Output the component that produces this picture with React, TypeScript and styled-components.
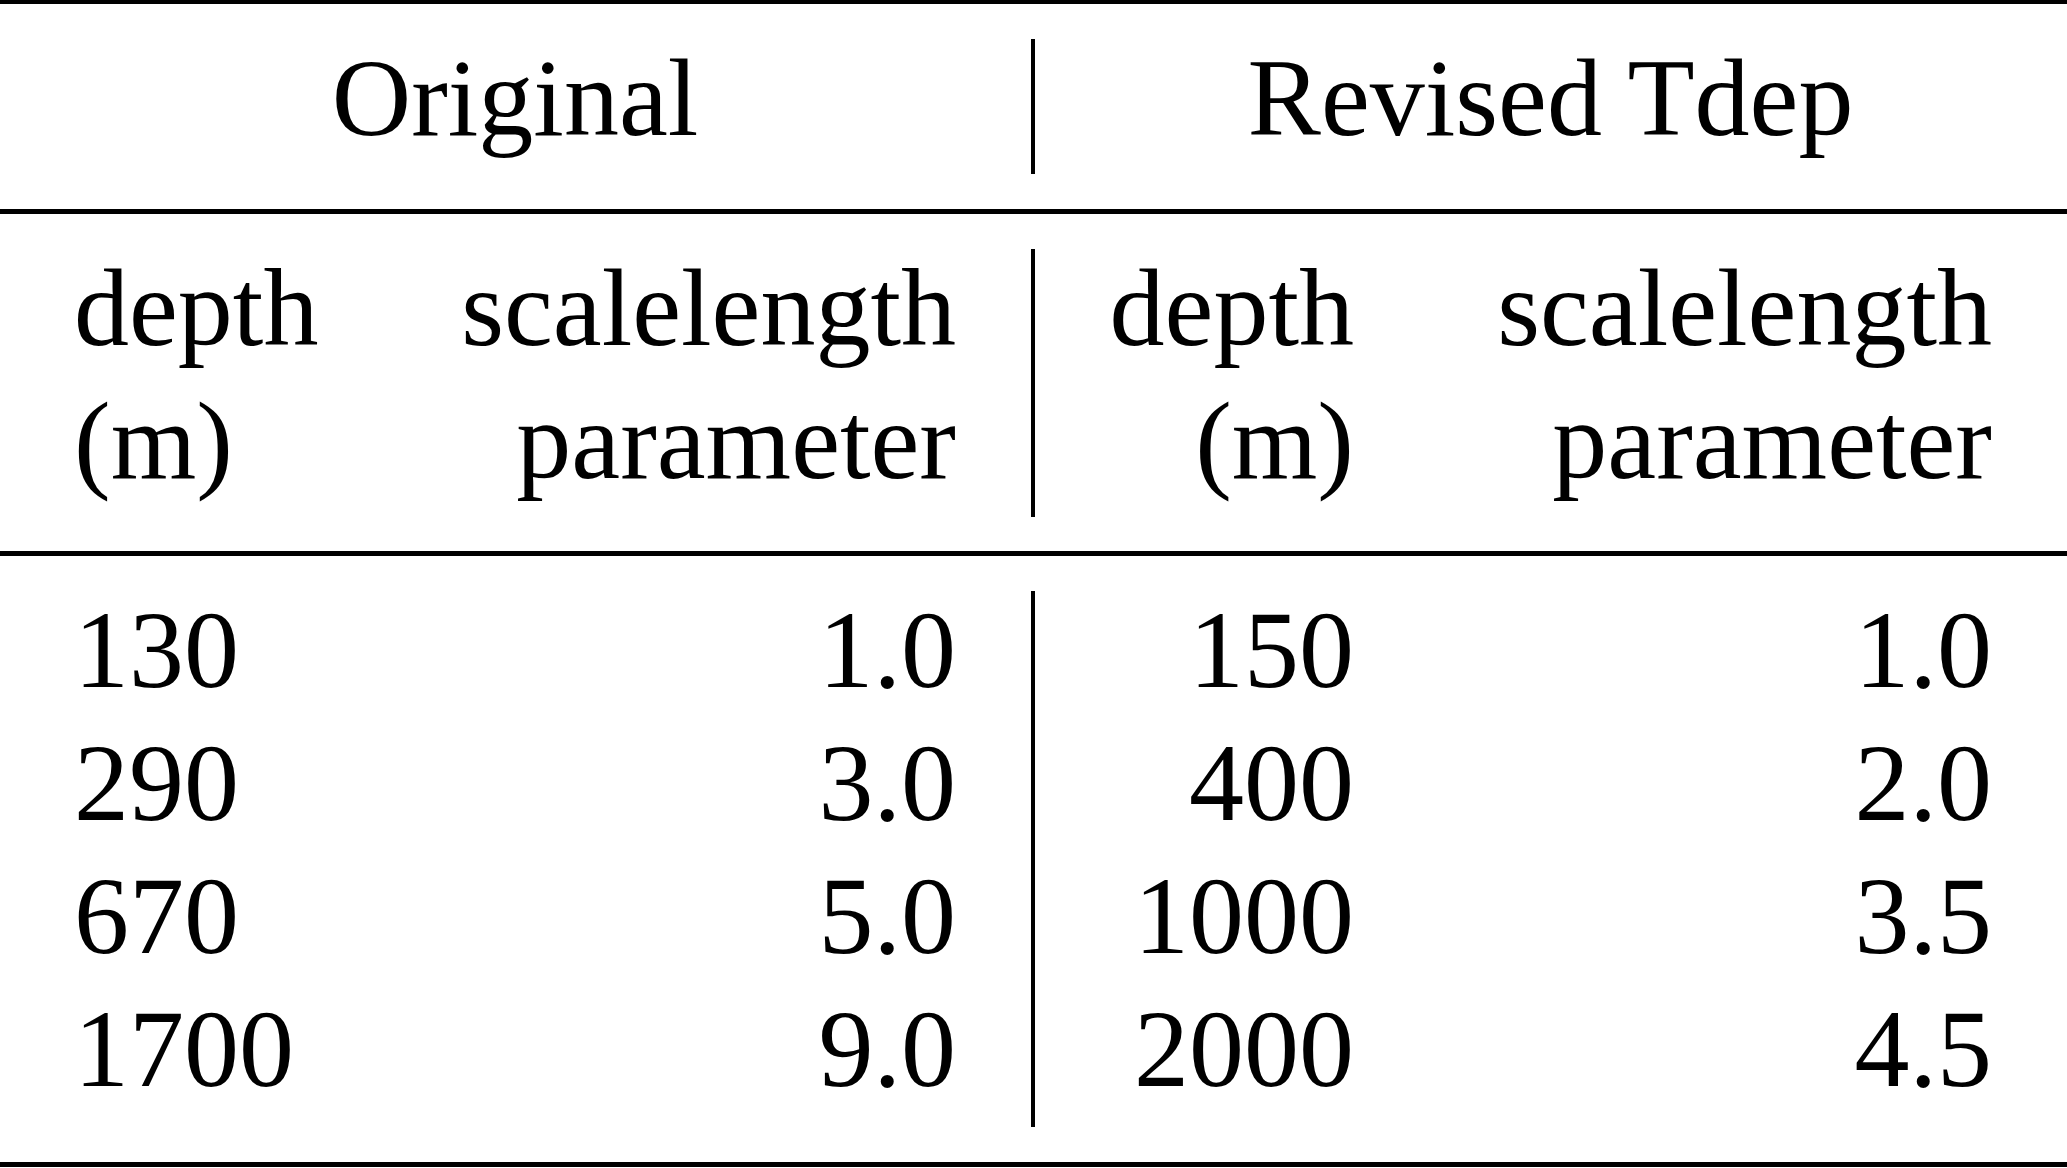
import { Fragment } from 'react';
import styled, { createGlobalStyle } from 'styled-components';

const GlobalStyle = createGlobalStyle`
  html, body {
    margin: 0;
    padding: 0;
    background: #fff;
  }
  body {
    width: 2067px;
    height: 1168px;
    overflow: hidden;
  }
`;

const Table = styled.div`
  width: 2067px;
  display: flex;
  flex-direction: column;
  font-family: 'Liberation Serif', 'Times New Roman', serif;
  font-size: 110px;
  line-height: 133px;
  color: #000;
`;

const Rule = styled.div<{ $h?: number }>`
  height: ${(p) => p.$h ?? 5}px;
  background: #000;
`;

const Section = styled.div<{ $pb: number }>`
  display: grid;
  grid-template-columns: 1031px 4px 1fr;
  padding: 28px 0 ${(p) => p.$pb}px;
`;

// vertical rule between the two halves, stops short of the horizontal rules
const Divider = styled.div<{ $tail: number }>`
  background: #000;
  margin: 7px 0 -${(p) => p.$tail}px;
`;

// first column has the width of the widest cell in the whole table ("depth")
const Half = styled.div`
  display: grid;
  grid-template-columns: 245px 1fr;
  padding: 0 75px 0 74px;
`;

const Title = styled.div`
  grid-column: 1 / -1;
  text-align: center;
  white-space: nowrap;
`;

const Cell = styled.div<{ $align: 'left' | 'right' }>`
  text-align: ${(p) => p.$align};
  white-space: nowrap;
`;

type Row = [string, string];

const original: Row[] = [
  ['130', '1.0'],
  ['290', '3.0'],
  ['670', '5.0'],
  ['1700', '9.0'],
];

const revised: Row[] = [
  ['150', '1.0'],
  ['400', '2.0'],
  ['1000', '3.5'],
  ['2000', '4.5'],
];

const HeadCells = ({ first }: { first: 'left' | 'right' }) => (
  <>
    <Cell $align={first}>
      depth
      <br />
      (m)
    </Cell>
    <Cell $align="right">
      scalelength
      <br />
      parameter
    </Cell>
  </>
);

const BodyCells = ({ rows, first }: { rows: Row[]; first: 'left' | 'right' }) => (
  <>
    {rows.map(([depth, scale]) => (
      <Fragment key={depth}>
        <Cell $align={first}>{depth}</Cell>
        <Cell $align="right">{scale}</Cell>
      </Fragment>
    ))}
  </>
);

const App = () => {
  return (
    <>
      <GlobalStyle />
      <Table>
        <Rule $h={4} />
        <Section $pb={44}>
          <Half>
            <Title>Original</Title>
          </Half>
          <Divider $tail={9} />
          <Half>
            <Title>Revised Tdep</Title>
          </Half>
        </Section>
        <Rule />
        <Section $pb={43}>
          <Half>
            <HeadCells first="left" />
          </Half>
          <Divider $tail={9} />
          <Half>
            <HeadCells first="right" />
          </Half>
        </Section>
        <Rule />
        <Section $pb={46}>
          <Half>
            <BodyCells rows={original} first="left" />
          </Half>
          <Divider $tail={11} />
          <Half>
            <BodyCells rows={revised} first="right" />
          </Half>
        </Section>
        <Rule />
      </Table>
    </>
  );
};

export default App;
